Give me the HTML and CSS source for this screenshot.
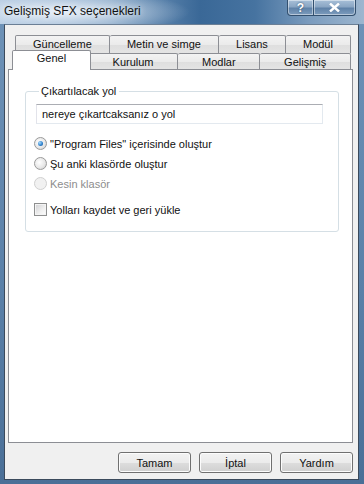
FILE: index.html
```html
<!DOCTYPE html>
<html lang="tr">
<head>
    <meta charset="UTF-8">
    <meta name="viewport" content="width=device-width, initial-scale=1.0">
    <title>Gelişmiş SFX seçenekleri</title>
    <link rel="stylesheet" href="styles.css">
</head>
<body>
    <div class="window">
        <div class="titlebar">
            <span class="title">Gelişmiş SFX seçenekleri</span>
            <div class="caption-btns">
                <span class="cap-btn cap-help">?</span>
                <span class="cap-btn cap-close">
                    <svg width="11" height="9" viewBox="0 0 11 9">
                        <path d="M1 0.5 L10 8.5 M10 0.5 L1 8.5" stroke="#fff" stroke-width="2.4" fill="none"/>
                    </svg>
                </span>
            </div>
        </div>

        <div class="client">
            <div class="tabs">
                <div class="tab-row tab-row-back">
                    <div class="tab">Güncelleme</div>
                    <div class="tab">Metin ve simge</div>
                    <div class="tab">Lisans</div>
                    <div class="tab">Modül</div>
                </div>
                <div class="tab-row tab-row-front">
                    <div class="tab tab-active">Genel</div>
                    <div class="tab">Kurulum</div>
                    <div class="tab">Modlar</div>
                    <div class="tab">Gelişmiş</div>
                </div>
            </div>

            <div class="panel">
                <fieldset class="group">
                    <legend>Çıkartılacak yol</legend>
                    <div class="textbox">nereye çıkartcaksanız o yol</div>

                    <div class="options">
                        <label class="option"><span class="radio checked"></span>"Program Files" içerisinde oluştur</label>
                        <label class="option"><span class="radio"></span>Şu anki klasörde oluştur</label>
                        <label class="option disabled"><span class="radio"></span>Kesin klasör</label>
                        <label class="option option-check"><span class="checkbox"></span>Yolları kaydet ve geri yükle</label>
                    </div>
                </fieldset>
            </div>

            <div class="buttons">
                <button class="btn">Tamam</button>
                <button class="btn">İptal</button>
                <button class="btn">Yardım</button>
            </div>
        </div>
    </div>
</body>
</html>
```

FILE: styles.css
```css
body {
    margin: 0;
    font-family: "Liberation Sans", Arial, sans-serif;
    font-size: 11px;
    color: #111;
}

.window {
    width: 364px;
    height: 484px;
    display: flex;
    flex-direction: column;
    background: linear-gradient(180deg, #6f93b8 0%, #5a80a8 60%, #4a6f97 100%);
    box-sizing: border-box;
    padding: 0 5px 4px 4px;
}

/* title bar (aero) */
.titlebar {
    height: 24px;
    margin: 0 -5px 0 -4px;
    display: flex;
    justify-content: space-between;
    align-items: flex-start;
    background:
        radial-gradient(ellipse 130px 22px at 60px 12px, rgba(235, 242, 250, 0.95), rgba(235, 242, 250, 0) 100%),
        linear-gradient(90deg, #a9c2dc 0%, #7fa1c3 30%, #3a6897 55%, #4673a0 70%, #7b9cbe 85%, #9db6cf 100%);
}

.title {
    margin: 4px 0 0 4px;
    font-size: 12px;
    color: #111;
    text-shadow: 0 0 6px #fff;
}

.caption-btns {
    display: flex;
    margin-right: 8px;
}

.cap-btn {
    height: 15px;
    display: flex;
    align-items: center;
    justify-content: center;
    border: 1px solid #33506f;
    border-top: none;
    color: #fff;
    font-weight: bold;
    font-size: 12px;
    background: linear-gradient(180deg, #a8c0d8 0%, #8aa6c4 45%, #5f82a8 55%, #7d9cbd 100%);
    box-shadow: inset 0 0 0 1px rgba(255, 255, 255, 0.45);
    text-shadow: 0 0 2px #23405f;
}

.cap-help {
    width: 25px;
    border-radius: 0 0 0 4px;
}

.cap-close {
    width: 41px;
    border-left: none;
    border-radius: 0 0 4px 0;
}

.client {
    flex: 1;
    display: flex;
    flex-direction: column;
    background-color: #f0f0f0;
    border: 1px solid #3b4a5c;
    border-top-color: #6b7f95;
    padding: 10px 5px 6px 3px;
}

/* tabs */
.tabs {
    display: flex;
    flex-direction: column;
}

.tab-row {
    display: flex;
    height: 18px;
}

.tab-row-back {
    margin: 0 2px 0 7px;
}

.tab-row-front {
    height: 16px;
    margin: 0 2px 0 6px;
}

.tab {
    flex: 1 1 auto;
    padding: 0 6px;
    text-align: center;
    line-height: 17px;
    border: 1px solid #8c8e94;
    border-bottom: none;
    border-left: none;
    border-radius: 2px 2px 0 0;
    background: linear-gradient(180deg, #f3f3f3 0%, #ebebeb 50%, #dedede 51%, #e4e4e4 100%);
    white-space: nowrap;
}

.tab:first-child {
    border-left: 1px solid #8c8e94;
}

.tab-row-front .tab {
    line-height: 16px;
}

.tab-active {
    position: relative;
    z-index: 2;
    margin: -3px -2px -1px -2px;
    border-left: 1px solid #8c8e94;
    background: #fff;
    line-height: 15px !important;
    padding-bottom: 4px;
}

.tab-active + .tab {
    border-left: none;
}

.panel {
    flex: 1;
    background-color: #fff;
    border: 1px solid #8c8e94;
    padding: 15px 13px 0 16px;
}

/* group box */
.group {
    margin: 0;
    border: 1px solid #d5dfe5;
    border-radius: 3px;
    padding: 0 15px 15px 10px;
}

.group legend {
    padding: 0 3px 0 2px;
    margin-left: 3px;
}

.textbox {
    height: 18px;
    line-height: 18px;
    padding-left: 5px;
    border: 1px solid #e3e9ef;
    border-top-color: #abadb3;
    border-left-color: #e2e3ea;
    margin-top: 7px;
}

.options {
    display: flex;
    flex-direction: column;
    margin-top: 13px;
    gap: 7px;
}

.option {
    display: flex;
    align-items: center;
    gap: 3px;
    height: 13px;
    margin-left: -2px;
}

.option.disabled {
    color: #8d8d8d;
}

.option-check {
    margin-top: 6px;
}

.radio {
    width: 11px;
    height: 11px;
    border-radius: 50%;
    border: 1px solid #9a9a9a;
    background: radial-gradient(circle at 40% 40%, #ffffff 0%, #e8e8e8 55%, #c9c9c9 100%);
    position: relative;
}

.radio.checked::after {
    content: "";
    position: absolute;
    left: 3px;
    top: 3px;
    width: 5px;
    height: 5px;
    border-radius: 50%;
    background: radial-gradient(circle at 35% 35%, #a8dcff 0%, #2b7dc9 60%, #124f8d 100%);
}

.option.disabled .radio {
    border-color: #d0d0d0;
    background: #f1f1f1;
}

.checkbox {
    width: 11px;
    height: 11px;
    border: 1px solid #8e8f8f;
    background: linear-gradient(135deg, #cfd0d2 0%, #f0f0f0 60%, #fdfdfd 100%);
    box-shadow: inset 0 0 0 1px #f4f4f4;
}

/* bottom buttons */
.buttons {
    display: flex;
    justify-content: flex-end;
    gap: 8px;
    margin-top: 9px;
}

.btn {
    width: 73px;
    height: 21px;
    padding: 0;
    font-family: "Liberation Sans", Arial, sans-serif;
    font-size: 11px;
    color: #111;
    border: 1px solid #707070;
    border-radius: 3px;
    background: linear-gradient(180deg, #f2f2f2 0%, #ebebeb 50%, #dddddd 51%, #cfcfcf 100%);
    box-shadow: inset 0 0 0 1px #fcfcfc;
}
```
